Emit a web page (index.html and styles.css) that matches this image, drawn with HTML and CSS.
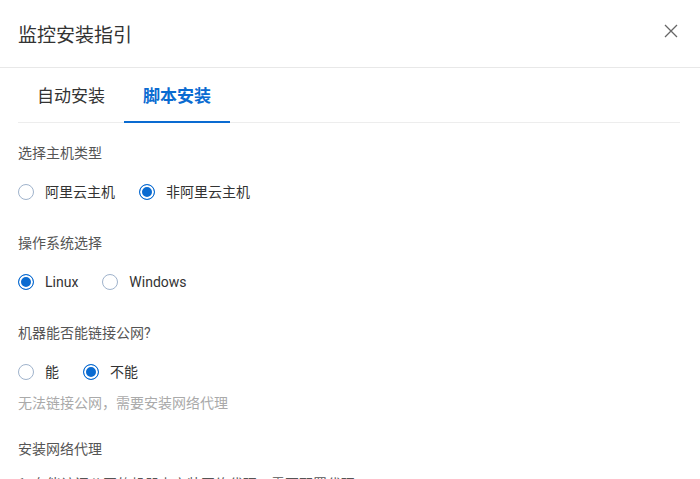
FILE: index.html
```html
<!DOCTYPE html>
<html lang="zh-CN">
<head>
    <meta charset="UTF-8">
    <meta name="viewport" content="width=device-width, initial-scale=1.0">
    <title>监控安装指引</title>
    <link rel="stylesheet" href="styles.css">
</head>
<body>

    <div class="dialog-header">
        <h1 class="dialog-title">监控安装指引</h1>
        <span class="dialog-close">
            <svg width="14" height="14" viewBox="0 0 14 14">
                <path d="M1 1 L13 13 M13 1 L1 13" stroke="#666" stroke-width="1.3" fill="none"/>
            </svg>
        </span>
    </div>

    <div class="tabs">
        <div class="tab">自动安装</div>
        <div class="tab active">脚本安装</div>
    </div>

    <div class="content">
        <div class="field-label first">选择主机类型</div>
        <div class="radio-group">
            <label class="radio"><span class="radio-dot"></span>阿里云主机</label>
            <label class="radio checked"><span class="radio-dot"></span>非阿里云主机</label>
        </div>

        <div class="field-label">操作系统选择</div>
        <div class="radio-group">
            <label class="radio checked"><span class="radio-dot"></span>Linux</label>
            <label class="radio"><span class="radio-dot"></span>Windows</label>
        </div>

        <div class="field-label">机器能否能链接公网?</div>
        <div class="radio-group">
            <label class="radio"><span class="radio-dot"></span>能</label>
            <label class="radio checked"><span class="radio-dot"></span>不能</label>
        </div>
        <div class="help-text">无法链接公网，需要安装网络代理</div>

        <div class="field-label section">安装网络代理</div>
        <div class="step-text">1. 在能访问公网的机器上安装网络代理，需要配置代理</div>
    </div>

</body>
</html>
```

FILE: styles.css
```css
/* base */
body {
    margin: 0;
    font-family: Roboto, "Noto Sans CJK SC", sans-serif;
    font-size: 14px;
    color: #333;
    background-color: #fff;
    overflow: hidden;
}

/* header */
.dialog-header {
    height: 68px;
    padding: 4px 22px 0 18px;
    box-sizing: border-box;
    display: flex;
    align-items: center;
    justify-content: space-between;
    border-bottom: 1px solid #e8e8e8;
}
.dialog-title {
    margin: 0;
    font-size: 19px;
    font-weight: normal;
    line-height: 28px;
    color: #333;
}
.dialog-close {
    display: flex;
    margin-top: -9px;
}

/* tabs */
.tabs {
    display: flex;
    margin: 0 20px 0 18px;
    border-bottom: 1px solid #ededed;
}
.tab {
    width: 106px;
    height: 53px;
    line-height: 57px;
    text-align: center;
    font-size: 17px;
    color: #333;
    margin-bottom: -1px;
    border-bottom: 2px solid transparent;
}
.tab.active {
    color: #0a6bd1;
    font-weight: bold;
    border-bottom-color: #0a6bd1;
}

/* form */
.content {
    padding: 0 18px;
}
.field-label {
    line-height: 20px;
    color: #555;
    margin-top: 31px;
}
.field-label.first {
    margin-top: 20px;
}
.field-label.section {
    margin-top: 26px;
}
.radio-group {
    display: flex;
    gap: 24px;
    margin-top: 19px;
    line-height: 20px;
}
.radio {
    display: flex;
    align-items: center;
    gap: 11px;
    color: #333;
}
.radio-dot {
    width: 16px;
    height: 16px;
    box-sizing: border-box;
    border: 1px solid #9fb3cc;
    border-radius: 50%;
    background-color: #fff;
}
.radio.checked .radio-dot {
    border-color: #0a6bd1;
    background-color: #0a6bd1;
    box-shadow: inset 0 0 0 2px #fff;
}
.help-text {
    margin-top: 11px;
    line-height: 20px;
    color: #aaa;
}
.step-text {
    margin-top: 15px;
    line-height: 20px;
    color: #555;
}
```
